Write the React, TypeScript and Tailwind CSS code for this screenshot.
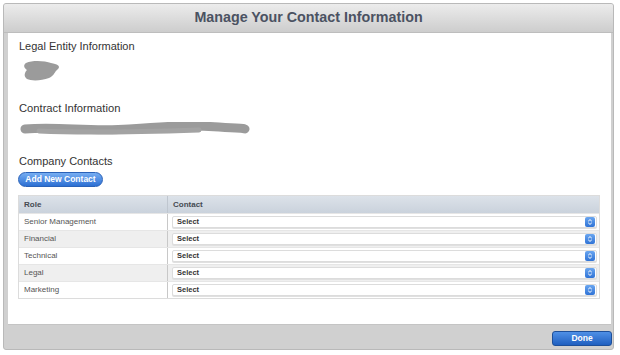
import React from "react";

const roles = ["Senior Management", "Financial", "Technical", "Legal", "Marketing"];

const Stepper = () => (
  <svg width="10" height="10" viewBox="0 0 10 10" className="shrink-0">
    <defs>
      <linearGradient id="stp" x1="0" y1="0" x2="0" y2="1">
        <stop offset="0" stopColor="#6aa6f0" />
        <stop offset="1" stopColor="#2f73d6" />
      </linearGradient>
    </defs>
    <rect x="0" y="0" width="10" height="10" rx="2" fill="url(#stp)" />
    <path d="M3.2 4.2 L5 2.6 L6.8 4.2" stroke="#fff" strokeWidth="1" fill="none" />
    <path d="M3.2 5.8 L5 7.4 L6.8 5.8" stroke="#fff" strokeWidth="1" fill="none" />
  </svg>
);

const Scribble = ({ wide }: { wide?: boolean }) =>
  wide ? (
    <svg width="232" height="14" viewBox="0 0 232 14">
      <path
        d="M6 7 C40 4, 70 10, 110 7 S170 3, 200 5 S222 6, 226 7"
        stroke="#9b9b9b"
        strokeWidth="9"
        strokeLinecap="round"
        fill="none"
      />
      <path d="M20 9 C60 11, 120 10, 180 8" stroke="#a3a3a3" strokeWidth="5" strokeLinecap="round" fill="none" />
    </svg>
  ) : (
    <svg width="42" height="22" viewBox="0 0 42 22">
      <path
        d="M5 3 C12 0, 24 1, 30 3 C36 4, 40 6, 37 9 C33 12, 34 15, 28 18 C20 21, 10 21, 6 19 C2 16, 4 12, 6 10 C3 8, 2 5, 5 3 Z"
        fill="#9b9b9b"
      />
    </svg>
  );

export default function App() {
  return (
    <div className="w-[620px] h-[355px] bg-white pt-[3px] pl-[3px] font-['Liberation_Sans',Arial,sans-serif]">
      <div className="w-[611px] h-[347px] flex flex-col bg-[#d0d0d0] border border-[#b9b9b9] rounded-[3px] overflow-hidden">
        {/* Title bar */}
        <div className="h-[29px] shrink-0 flex items-center justify-center bg-gradient-to-b from-[#ececec] to-[#cdcdcd] border-b border-[#bdbdbd]">
          <h1 className="text-[14.3px] font-bold text-[#4b5262]">
            Manage Your Contact Information
          </h1>
        </div>

        {/* Content */}
        <div className="ml-[4px] mr-[2px] h-[292px] bg-white border-b border-[#c4c4c4] pl-[10px] pr-[10px] pt-[7px] text-[#333]">
          <div className="h-[13px] leading-[13px] text-[11px] pl-px">Legal Entity Information</div>
          <div className="mt-[7px] h-[22px] pl-[3px]">
            <Scribble />
          </div>

          <div className="mt-[20px] h-[13px] leading-[13px] text-[11.2px] pl-px">Contract Information</div>
          <div className="mt-[7px] h-[14px] pl-[1px]">
            <Scribble wide />
          </div>

          <div className="mt-[19px] h-[13px] leading-[13px] text-[11px] pl-px">Company Contacts</div>
          <button className="mt-[4px] h-[15px] w-[85px] flex items-center justify-center rounded-full border border-[#2a62b8] bg-gradient-to-b from-[#77aef2] to-[#2b6fd3] text-white text-[8.5px] font-bold">
            Add New Contact
          </button>

          {/* Table */}
          <div className="mt-[8px] w-[582px] border border-[#dcdcdc] text-[8px]">
            <div className="h-[17px] flex bg-gradient-to-b from-[#dce2e9] to-[#cad2dc] text-[#454a52] font-bold">
              <div className="w-[149px] pl-[5px] flex items-center border-r border-[#bfc6cf]">Role</div>
              <div className="flex-1 pl-[5px] flex items-center">Contact</div>
            </div>
            {roles.map((r, i) => (
              <div
                key={r}
                className={`h-[17px] flex ${i % 2 === 1 ? "bg-[#efefef]" : "bg-white"} border-t border-[#e6e6e6]`}
              >
                <div className="w-[149px] pl-[5px] flex items-center text-[#555] border-r border-[#c8c8c8]">
                  {r}
                </div>
                <div className="flex-1 pl-[4px] pr-[2px] flex items-center">
                  <div className="flex-1 h-[12px] flex items-center justify-between bg-white border border-[#dcdcdc] shadow-[0_1px_0_#e0e0e0] rounded-[2px] pl-[4px] pr-[1px]">
                    <span className="text-[7.5px] font-semibold text-[#333]">Select</span>
                    <Stepper />
                  </div>
                </div>
              </div>
            ))}
          </div>
        </div>

        {/* Footer */}
        <div className="flex-1 flex items-center justify-end pr-[1px] pt-[2px]">
          <button className="w-[60px] h-[15px] rounded-[3px] border border-[#1d4f9a] bg-gradient-to-b from-[#4f90e6] to-[#1f5fc0] text-white text-[8.5px] font-bold">
            Done
          </button>
        </div>
      </div>
    </div>
  );
}
